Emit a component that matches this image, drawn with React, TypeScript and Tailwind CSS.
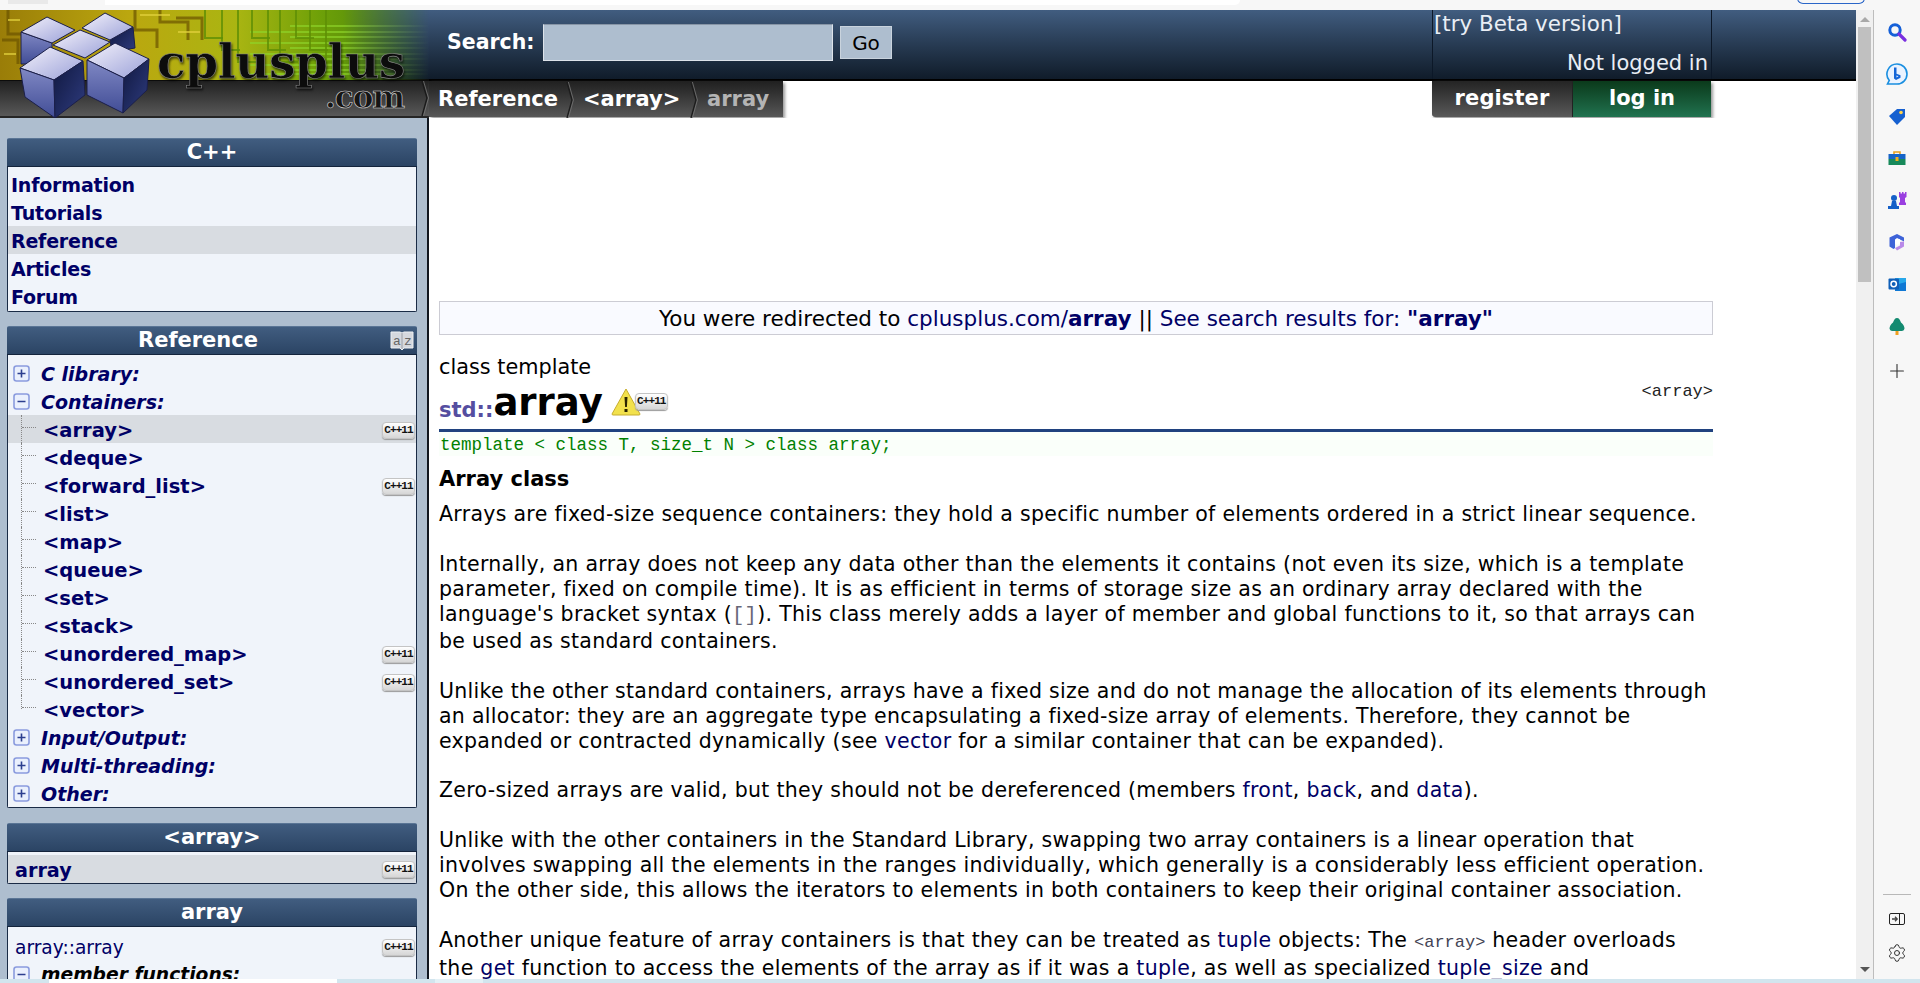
import React from "react";
import { Plus, Settings } from "lucide-react";

const SANS = "font-['DejaVu_Sans',sans-serif]";
const MONO = "font-['Liberation_Mono',monospace]";

function Badge() {
  return (
    <span className="inline-flex h-[17px] w-[33px] shrink-0 items-center justify-center rounded-[4px] border border-[#c4c4c4] bg-linear-to-b from-[#ffffff] to-[#d6d6d6] font-['Liberation_Mono',monospace] text-[11px] font-bold leading-none tracking-[-0.9px] text-[#111] shadow-[0_1px_1px_#999]">
      C++11
    </span>
  );
}

function Toggle({ open }: { open?: boolean }) {
  return (
    <svg width="17" height="17" viewBox="0 0 17 17" className="shrink-0">
      <rect x="1" y="1" width="15" height="15" rx="2.5" fill="#eaf0fd" stroke="#8a9bde" strokeWidth="1.6" />
      <path d={open ? "M4.500 8.500h8" : "M4.500 8.500h8M8.500 4.500v8"} stroke="#2c3f8f" strokeWidth="1.6" />
    </svg>
  );
}

function BoxHead({ children, extra, shift }: { children: React.ReactNode; extra?: React.ReactNode; shift?: boolean }) {
  return (
    <div className={"relative flex h-[29px] items-center justify-center border-b border-[#14243c] border-t border-t-[#5a7595] bg-linear-to-b from-[#415d80] to-[#2b4464] text-[21px] font-bold text-white " + (shift ? "pr-[28px]" : "")}>
      {children}
      {extra}
    </div>
  );
}

function Box({ title, extra, children, className, shift }: { title: string; extra?: React.ReactNode; children: React.ReactNode; className?: string; shift?: boolean }) {
  return (
    <div className={"overflow-hidden rounded-[2px] " + (className ?? "")}>
      <BoxHead extra={extra} shift={shift}>
        {title}
      </BoxHead>
      <div className="border-x border-b border-[#1a2b45] bg-[#f0f4fa]">{children}</div>
    </div>
  );
}

function NavRow({ label, active }: { label: string; active?: boolean }) {
  return (
    <div className={"flex h-[28px] items-center pl-[3px] pt-[2px] text-[19px] tracking-[-0.2px] font-bold text-[#000066] " + (active ? "bg-[#d8dce1]" : "")}>
      {label}
    </div>
  );
}

function GroupRow({ label, open }: { label: string; open?: boolean }) {
  return (
    <div className="flex h-[28px] items-center pl-[5px] text-[19px] font-bold italic text-[#000066]">
      <Toggle open={open} />
      <span className="ml-[11px] pt-[2px]">{label}</span>
    </div>
  );
}

function TreeRow({ label, active, badge, last }: { label: string; active?: boolean; badge?: boolean; last?: boolean }) {
  return (
    <div className={"flex h-[28px] items-center pr-[1px] text-[19.500px] font-bold text-[#000066] " + (active ? "bg-[#d8dce1]" : "")}>
      <div className={"ml-[13px] w-[15px] shrink-0 self-start border-l border-dotted border-[#888] " + (last ? "h-[14px]" : "h-[28px]")}>
        <div className="h-[13px] border-b border-dotted border-[#888]" />
      </div>
      <span className="ml-[7px] flex-1 pt-[4px]">{label}</span>
      {badge && (
        <span className="-mt-[5px]">
          <Badge />
        </span>
      )}
    </div>
  );
}

function Logo() {
  const hs = [16, 22, 27, 33, 38, 44, 49, 55, 60, 64];
  const vs = [205, 222, 238, 252, 268, 280, 296, 310, 326];
  return (
    <svg width="429" height="108" viewBox="0 0 429 108" className="block shrink-0">
      <defs>
        <linearGradient id="blue" x1="0" y1="0" x2="0" y2="1">
          <stop offset="0" stopColor="#415d80" />
          <stop offset="1" stopColor="#101c2a" />
        </linearGradient>
        <linearGradient id="board" x1="0" y1="0" x2="1" y2="0">
          <stop offset="0" stopColor="#9a7d08" />
          <stop offset="0.3" stopColor="#bba70f" />
          <stop offset="0.55" stopColor="#aab512" />
          <stop offset="0.75" stopColor="#6da008" />
          <stop offset="1" stopColor="#3f7a10" />
        </linearGradient>
        <linearGradient id="fade" x1="0" y1="0" x2="1" y2="0">
          <stop offset="0" stopColor="#fff" />
          <stop offset="0.8" stopColor="#fff" />
          <stop offset="1" stopColor="#000" />
        </linearGradient>
        <mask id="m">
          <rect width="429" height="70" fill="url(#fade)" />
        </mask>
        <linearGradient id="steel" x1="0" y1="0" x2="0" y2="1">
          <stop offset="0" stopColor="#1f1f1f" />
          <stop offset="1" stopColor="#5c5c5c" />
        </linearGradient>
        <linearGradient id="top" x1="0" y1="0" x2="1" y2="1">
          <stop offset="0" stopColor="#f4f2fb" />
          <stop offset="1" stopColor="#9aa0d8" />
        </linearGradient>
        <linearGradient id="left" x1="0" y1="0" x2="0" y2="1">
          <stop offset="0" stopColor="#8088c4" />
          <stop offset="1" stopColor="#414d96" />
        </linearGradient>
        <linearGradient id="right" x1="0" y1="0" x2="1" y2="1">
          <stop offset="0" stopColor="#10183f" />
          <stop offset="1" stopColor="#2f3c80" />
        </linearGradient>
      </defs>
      <rect width="429" height="70" fill="url(#blue)" />
      <rect y="70" width="429" height="38" fill="url(#steel)" />
      <rect y="69" width="429" height="2" fill="#0c0c0c" />
      <rect y="106" width="429" height="2" fill="#262626" />
      <g mask="url(#m)">
        <rect width="429" height="70" fill="url(#board)" />
        {hs.map((y, i) => (
          <path key={y} d={`M${i % 2 ? 250 : 290} ${y}H428`} stroke="#8fd62a" strokeWidth="2" opacity="0.65" />
        ))}
        {vs.map((x, i) => (
          <path key={x} d={`M${x} 0V${28 + (i % 3) * 12}H${x + 18}`} stroke="#5e8f05" strokeWidth="2" fill="none" opacity="0.8" />
        ))}
        <path d="M135 0v20h22v18M160 0v12h28v18M8 0v24h14M2 30h16v24M176 8h26v22" stroke="#6b5200" strokeWidth="3" fill="none" opacity="0.7" />
        <path d="M140 5h30M178 22h22M8 10h12M4 44h12" stroke="#e3d23d" strokeWidth="2" opacity="0.7" />
      </g>
      <text x="157" y="68" fontFamily="'DejaVu Serif',serif" fontWeight="700" fontSize="47" fill="#0c0c0c" stroke="#8a8a8a" strokeWidth="0.6" letterSpacing="-0.4" className="drop-shadow-[1px_2px_1px_rgba(0,0,0,0.6)]">
        cplusplus
      </text>
      <text x="325" y="98" fontFamily="'DejaVu Serif',serif" fontWeight="700" fontSize="31" fill="#151515" stroke="#dcdcdc" strokeWidth="0.6" letterSpacing="-1">
        .com
      </text>
      <g stroke="#1b1f4a" strokeWidth="1">
        <polygon points="21,22 52,33 52,54 21,54" fill="url(#left)" />
        <polygon points="110,30 133,17 135,38 112,42" fill="url(#right)" />
        <polygon points="21,22 47,7 75,20 52,33" fill="url(#top)" />
        <polygon points="82,18 105,3 133,17 110,30" fill="url(#top)" />
        <polygon points="53,35 80,20 110,32 85,48" fill="url(#top)" />
        <polygon points="20,58 50,37 83,51 54,70" fill="url(#top)" />
        <polygon points="20,58 54,70 55,108 25,87" fill="url(#left)" />
        <polygon points="54,70 83,51 85,85 55,108" fill="url(#right)" />
        <polygon points="87,50 115,33 149,49 124,68" fill="url(#top)" />
        <polygon points="87,50 124,68 123,103 87,85" fill="url(#left)" />
        <polygon points="124,68 149,49 147,80 123,103" fill="url(#right)" />
      </g>
      <path d="M422 71l5 17-5 18" stroke="#1a1a1a" strokeWidth="1.400" fill="none" />
      <path d="M423.500 71l5 17-5 18" stroke="#777" strokeWidth="0.800" fill="none" />
    </svg>
  );
}

function Crumb({ label, w }: { label: string; w: string }) {
  return (
    <div className={"flex h-full items-center pl-[9px] font-bold text-white " + w}>
      <span className="flex-1">{label}</span>
      <svg width="8" height="36" viewBox="0 0 8 36" className="shrink-0">
        <path d="M1 0l5 18-5 18" stroke="#1c1c1c" strokeWidth="1.400" fill="none" />
        <path d="M2.400 0l5 18-5 18" stroke="#777" strokeWidth="0.800" fill="none" />
      </svg>
    </div>
  );
}

function Header() {
  return (
    <div className={"flex h-[108px] text-[21px] " + SANS}>
      <Logo />
      <div className="flex min-w-0 flex-1 flex-col">
        <div className="flex h-[71px] items-center border-b-2 border-black bg-linear-to-b from-[#415d80] to-[#101c2a]">
          <span className="ml-[18px] w-[96px] -translate-y-[2px] text-[20.500px] font-bold text-white">Search:</span>
          <div className="h-[37px] w-[290px] -translate-y-[2px] border border-[#dde3ea] border-t-[#8795a6] bg-[#aebecf]" />
          <div className="ml-[7px] flex h-[33px] w-[52px] -translate-y-[2px] items-center justify-center border border-[#c9d3dd] bg-[#aebecf] text-[20px] text-black">Go</div>
          <div className="ml-[540px] flex h-[69px] w-[280px] flex-col justify-between border-x border-[#0c1828] pl-[1px] pr-[3px] text-[#e9eef5]">
            <span className="whitespace-nowrap pt-[1px] text-[21.400px] leading-[26px]">[try Beta version]</span>
            <span className="self-end whitespace-nowrap leading-[32px]">Not logged in</span>
          </div>
        </div>
        <div className="flex h-[37px]">
          <div className="flex h-[36px] w-[354px] items-stretch bg-linear-to-b from-[#202020] to-[#585858] pt-[1px] shadow-[2px_2px_3px_#999]">
            <Crumb label="Reference" w="w-[145px]" />
            <Crumb label="<array>" w="w-[124px]" />
            <span className="flex h-full items-center pl-[9px] font-bold text-[#b4b4b4]">array</span>
          </div>
          <div className="ml-[649px] flex h-[36px] w-[279px] font-bold text-white shadow-[2px_2px_3px_#999]">
            <div className="flex w-[140px] items-center justify-center rounded-bl-[3px] bg-linear-to-b from-[#242424] to-[#5a5a5a] tracking-[0.1px]">register</div>
            <div className="flex w-[139px] items-center justify-center border-l border-[#222] bg-linear-to-b from-[#0b3a1b] to-[#217350]">log in</div>
          </div>
        </div>
      </div>
    </div>
  );
}

function Sidebar() {
  return (
    <div className={"h-full w-[429px] shrink-0 overflow-hidden border-r-2 border-[#10161f] bg-[#aebecf] pl-[7px] pr-[10px] pt-[20px] " + SANS}>
      <Box title="C++">
        <div className="pt-[3px] pb-[1px]">
          <NavRow label="Information" />
          <NavRow label="Tutorials" />
          <NavRow label="Reference" active />
          <NavRow label="Articles" />
          <NavRow label="Forum" />
        </div>
      </Box>
      <Box
        title="Reference"
        className="mt-[14px]"
        shift
        extra={
          <svg width="26" height="26" viewBox="0 0 26 26" className="absolute right-[2px] top-[1px]">
            <path d="M2 4h9l2 1 2-1h9v16h-9l-2 2-2-2H2z" fill="#d5d8de" stroke="#eef0f3" strokeWidth="1" />
            <path d="M13 5v16" stroke="#9a9ea6" strokeWidth="1" />
            <text x="4" y="17" fontFamily="'Liberation Mono',monospace" fontSize="13" fontWeight="400" fill="#666">a</text>
            <text x="15" y="17" fontFamily="'Liberation Mono',monospace" fontSize="13" fontWeight="400" fill="#666">z</text>
          </svg>
        }
      >
        <div className="pt-[4px]">
          <GroupRow label="C library:" />
          <GroupRow label="Containers:" open />
          <TreeRow label="<array>" active badge />
          <TreeRow label="<deque>" />
          <TreeRow label="<forward_list>" badge />
          <TreeRow label="<list>" />
          <TreeRow label="<map>" />
          <TreeRow label="<queue>" />
          <TreeRow label="<set>" />
          <TreeRow label="<stack>" />
          <TreeRow label="<unordered_map>" badge />
          <TreeRow label="<unordered_set>" badge />
          <TreeRow label="<vector>" last />
          <GroupRow label="Input/Output:" />
          <GroupRow label="Multi-threading:" />
          <GroupRow label="Other:" />
        </div>
      </Box>
      <Box title="<array>" className="mt-[15px]">
        <div className="pt-[3px]">
          <div className="flex h-[28px] items-center bg-[#d8dce1] pl-[7px] pr-[1px] text-[19.200px] font-bold text-[#000066]">
            <span className="flex-1 pt-[4px]">array</span>
            <span className="-mt-[5px]">
              <Badge />
            </span>
          </div>
        </div>
      </Box>
      <Box title="array" className="mt-[14px]">
        <div className="h-[80px] pt-[5px]">
          <div className="flex h-[28px] items-center pl-[7px] pr-[1px] text-[18.600px] text-[#000066]">
            <span className="flex-1 pt-[3px]">array::array</span>
            <span className="-mt-[5px]">
              <Badge />
            </span>
          </div>
          <div className="flex h-[28px] items-center pl-[5px] text-[18.700px] font-bold italic text-black">
            <Toggle open />
            <span className="ml-[11px] pt-[3px]">member functions:</span>
          </div>
        </div>
      </Box>
    </div>
  );
}

const L = ({ children }: { children: React.ReactNode }) => <span className="text-[#000066]">{children}</span>;

function Main() {
  return (
    <div className={"min-w-0 flex-1 overflow-hidden bg-white pl-[10px] pt-[183px] text-[20.500px] leading-[24.950px] tracking-[0.3px] " + SANS}>
      <div className="w-[1274px]">
        <div className="flex h-[34px] items-center justify-center border border-[#ccccd4] bg-[#f9faff] pt-[2px] text-[21.500px] tracking-normal text-black">
          <span>
            You were redirected to <L>cplusplus.com/<b>array</b></L> || <L>See search results for: <b>"array"</b></L>
          </span>
        </div>
        <div className="mt-[20px] h-[24px] leading-[24px] tracking-normal text-[20.800px] text-black">class template</div>
        <div className="relative flex h-[50px] items-end justify-between">
          <div className="flex items-end tracking-normal">
            <span className="mb-[6px] text-[21px] font-bold text-[#554ea0]">std::</span>
            <span className="mb-[3px] text-[37px] leading-[46px] font-bold text-black">array</span>
            <span className="mb-[13px] ml-[8px] flex items-start">
              <svg width="30" height="28" viewBox="0 0 30 28">
                <path d="M15 1L29 26a1 1 0 0 1-1 1H2a1 1 0 0 1-1-1Z" fill="#f2e14c" stroke="#c7ad2e" />
                <path d="M13.500 9h3l-.6 10h-1.800zM13.500 21h3v3h-3z" fill="#2b2400" />
              </svg>
              <span className="-ml-[6px] -mt-[3px]">
                <Badge />
              </span>
            </span>
          </div>
          <span className={"mb-[27px] text-[17px] leading-[20px] tracking-normal text-[#222] " + MONO}>&lt;array&gt;</span>
        </div>
        <div className="h-[3px] bg-[#20427f]" />
        <div className={"h-[24px] bg-[#fafffa] pl-[1px] pt-[3px] text-[17.500px] leading-[21px] tracking-normal text-[#008000] " + MONO}>template &lt; class T, size_t N &gt; class array;</div>
        <div className="mt-[11px] h-[25px] text-[21px] font-bold tracking-normal text-black">Array class</div>
        <div className="mt-[10px] whitespace-nowrap text-black">
          Arrays are fixed-size sequence containers: they hold a specific number of elements ordered in a strict linear sequence.
          <br />
          <br />
          Internally, an array does not keep any data other than the elements it contains (not even its size, which is a template
          <br />
          parameter, fixed on compile time). It is as efficient in terms of storage size as an ordinary array declared with the
          <br />
          language's bracket syntax (<span className={"text-[#667] " + MONO}>[]</span>). This class merely adds a layer of member and global functions to it, so that arrays can
          <br />
          be used as standard containers.
          <br />
          <br />
          Unlike the other standard containers, arrays have a fixed size and do not manage the allocation of its elements through
          <br />
          an allocator: they are an aggregate type encapsulating a fixed-size array of elements. Therefore, they cannot be
          <br />
          expanded or contracted dynamically (see <L>vector</L> for a similar container that can be expanded).
          <br />
          <br />
          Zero-sized arrays are valid, but they should not be dereferenced (members <L>front</L>, <L>back</L>, and <L>data</L>).
          <br />
          <br />
          Unlike with the other containers in the Standard Library, swapping two array containers is a linear operation that
          <br />
          involves swapping all the elements in the ranges individually, which generally is a considerably less efficient operation.
          <br />
          On the other side, this allows the iterators to elements in both containers to keep their original container association.
          <br />
          <br />
          Another unique feature of array containers is that they can be treated as <L>tuple</L> objects: The <span className={"text-[17px] tracking-normal text-[#445] " + MONO}>&lt;array&gt;</span> header overloads
          <br />
          the <L>get</L> function to access the elements of the array as if it was a <L>tuple</L>, as well as specialized <L>tuple_size</L> and
        </div>
      </div>
    </div>
  );
}

function Scrollbar() {
  return (
    <div className="flex h-full w-[18px] shrink-0 flex-col items-center border-r border-[#bdbdbd] bg-[#f0f0f0]">
      <div className="mt-[7px] h-0 w-0 border-x-[5px] border-b-[5px] border-x-transparent border-b-[#a8a8a8]" />
      <div className="mt-[5px] h-[255px] w-[13px] bg-[#c0c0c0]" />
      <div className="flex-1" />
      <div className="mb-[7px] h-0 w-0 border-x-[5px] border-t-[5px] border-x-transparent border-t-[#555]" />
    </div>
  );
}

function Ico({ children }: { children: React.ReactNode }) {
  return <div className="flex h-[42px] items-center justify-center">{children}</div>;
}

function RightRail() {
  return (
    <div className="flex h-full flex-1 flex-col bg-[#f7f7f7] pt-[1px]">
      <Ico>
        <svg width="20" height="20" viewBox="0 0 20 20">
          <circle cx="8" cy="8" r="5.200" fill="none" stroke="#1560d8" strokeWidth="3" />
          <path d="M12 12l6 6" stroke="#7a2fe0" strokeWidth="3.200" strokeLinecap="round" />
        </svg>
      </Ico>
      <Ico>
        <svg width="22" height="22" viewBox="0 0 22 22">
          <path d="M11 1a10 10 0 0 1 0 20H1.500l1.800-3.600A10 10 0 0 1 11 1z" fill="#eaf3ff" stroke="#1a8fe0" strokeWidth="1.600" />
          <path d="M8 4.500h2.500v6.200l4 1.500v2.500L10 17l-2-1.500z" fill="#1466d8" />
          <path d="M10.500 12.500l2 .8-2 1.200z" fill="#eaf3ff" />
        </svg>
      </Ico>
      <Ico>
        <svg width="18" height="18" viewBox="0 0 18 18">
          <path d="M1 9L9 2h8v8l-8 8z" fill="#1660d0" />
          <circle cx="13" cy="5.500" r="1.800" fill="#ffd24a" />
        </svg>
      </Ico>
      <Ico>
        <svg width="18" height="14" viewBox="0 0 18 14">
          <path d="M6 3V1h6v2" fill="none" stroke="#e8a020" strokeWidth="1.600" />
          <rect x="0.500" y="3" width="17" height="5" fill="#1664c8" />
          <rect x="0.500" y="8" width="17" height="6" fill="#17895a" />
          <rect x="7.500" y="6" width="3" height="4" fill="#f0b020" />
        </svg>
      </Ico>
      <Ico>
        <svg width="19" height="19" viewBox="0 0 19 19">
          <circle cx="6" cy="7" r="3" fill="#1560c8" />
          <path d="M4 10h4l1 5h2v3H0v-3h3z" fill="#1560c8" />
          <path d="M11 1h1.500v1.500H14V1h1.500v1.500H17V1h1.500v5l-1.500 1v4l1 1v2h-7v-2l1-1V7l-1-1z" fill="#9a3fe0" />
        </svg>
      </Ico>
      <Ico>
        <svg width="18" height="18" viewBox="0 0 18 18">
          <path d="M9 1l7 3.500v4L11 6 7 9v6l-1.500 1L1.500 13.500v-9z" fill="#3e63d8" />
          <path d="M16 8.500v5L9 17.500 7 15l5-2.500V9z" fill="#b98ae8" />
          <path d="M7 6.500L9 5l3 1.500v4L9 12 7 10.500z" fill="#fff" />
        </svg>
      </Ico>
      <Ico>
        <svg width="18" height="18" viewBox="0 0 18 18">
          <rect x="7" y="3" width="11" height="13" fill="#28a8ea" />
          <path d="M7 10l11-3v9H7z" fill="#0f78d4" />
          <rect x="0.500" y="3.500" width="10.500" height="11" rx="1" fill="#0f5fb8" />
          <circle cx="5.700" cy="9" r="2.700" fill="none" stroke="#fff" strokeWidth="1.500" />
        </svg>
      </Ico>
      <Ico>
        <svg width="16" height="17" viewBox="0 0 16 17">
          <path d="M8 0c2 0 3 2 4 4.500 2 1.500 3.500 4 3.500 6A2.800 2.800 0 0 1 13 13H3A2.800 2.800 0 0 1 .5 10.500c0-2 1.500-4.500 3.500-6C5 2 6 0 8 0z" fill="#148a70" />
          <rect x="6.500" y="13" width="3" height="4" fill="#f0a020" />
        </svg>
      </Ico>
      <Ico>
        <Plus size={22} strokeWidth={1.200} className="mt-[5px] text-[#333]" />
      </Ico>
      <div className="flex-1" />
      <div className="mx-[9px] h-[1px] bg-[#b8b8b8]" />
      <div className="flex h-[48px] items-center justify-center">
        <svg width="16" height="12" viewBox="0 0 16 12">
          <rect x="0.500" y="0.500" width="15" height="11" rx="1.500" fill="none" stroke="#222" />
          <path d="M10.500 0.500v11" stroke="#222" />
          <path d="M3 6h5M6 3.800L8.200 6 6 8.200" fill="none" stroke="#444" strokeWidth="1.300" />
        </svg>
      </div>
      <div className="flex h-[36px] items-start justify-center">
        <Settings size={20} strokeWidth={1.200} className="text-[#333]" />
      </div>
    </div>
  );
}

function TopStrip() {
  return (
    <div className="flex h-[10px] shrink-0 items-start overflow-hidden bg-[#f7f7f7]">
      <div className="ml-[8px] h-[4px] w-[40px] bg-[#e9e9e9]" />
      <div className="ml-[57px] h-[5px] w-[1135px] rounded-br-[6px] bg-white" />
      <div className="flex-1" />
      <div className="mr-[55px] -mt-[2px] h-[6px] w-[68px] rounded-b-[6px] border border-[#2a66c8]" />
    </div>
  );
}

function BottomStrip() {
  return (
    <div className="flex h-[4px] shrink-0 bg-[#d2e5ee]">
      <div className="ml-[49px] h-full w-[288px] bg-white" />
      <div className="ml-[98px] h-full w-[48px] bg-[#e4f1f6]" />
    </div>
  );
}

export default function App() {
  return (
    <div className="flex h-[983px] w-[1920px] flex-col overflow-hidden bg-white">
      <TopStrip />
      <div className="flex min-h-0 flex-1">
        <div className="flex w-[1856px] shrink-0 flex-col">
          <Header />
          <div className="flex min-h-0 flex-1">
            <Sidebar />
            <Main />
          </div>
        </div>
        <Scrollbar />
        <RightRail />
      </div>
      <BottomStrip />
    </div>
  );
}
